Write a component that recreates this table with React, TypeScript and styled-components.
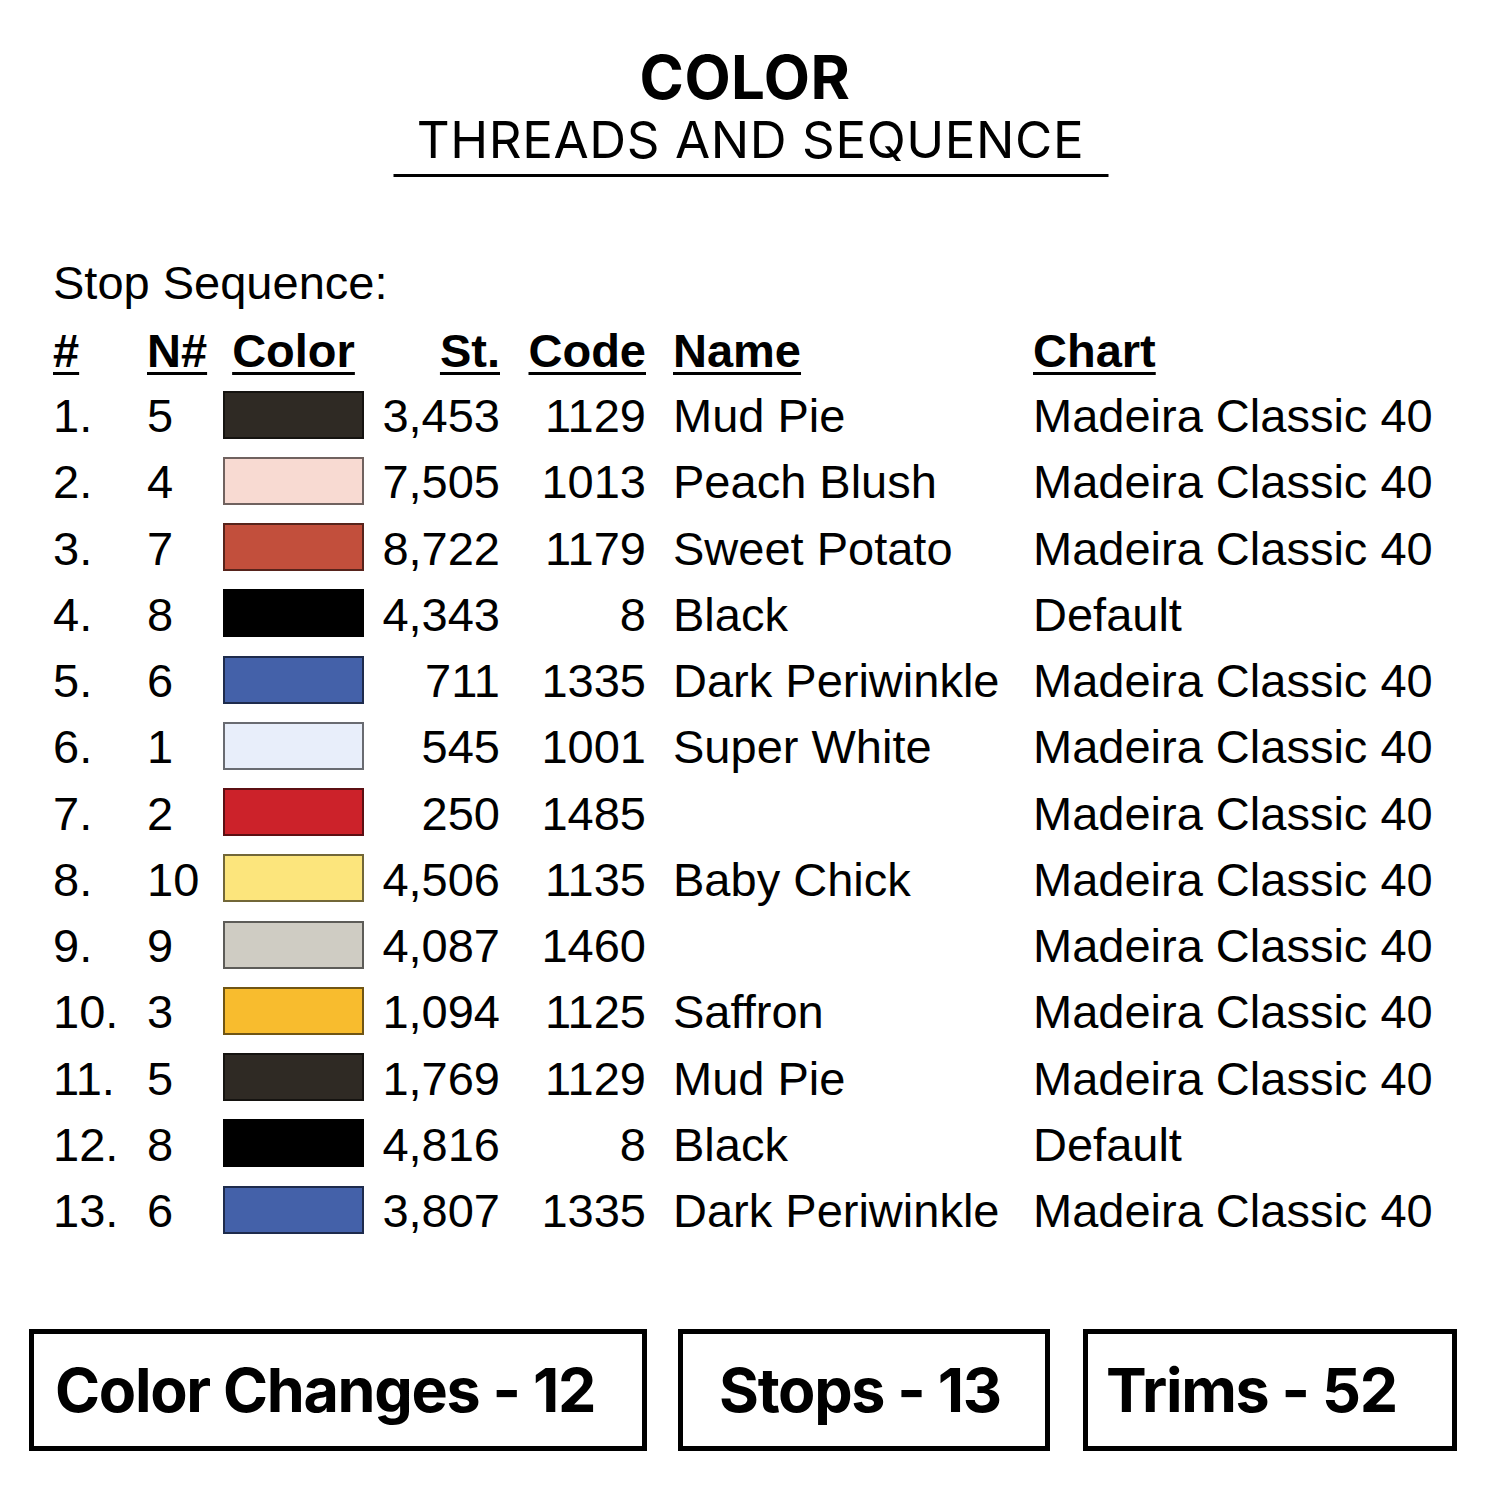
import React from "react";
import styled, { createGlobalStyle } from "styled-components";

const Global = createGlobalStyle`
  html, body { margin: 0; padding: 0; background: #fff; }
  body { font-family: "Liberation Sans", Arial, sans-serif; color: #000; }
`;

const Page = styled.div`
  width: 1500px;
  height: 1500px;
  background: #fff;
  display: flex;
  flex-direction: column;
  overflow: hidden;
`;

const TitleBlock = styled.header`
  padding-top: 47px;
  display: flex;
  flex-direction: column;
  align-items: center;
`;

const Title = styled.h1`
  margin: 0;
  font-family: Inter, "Open Sans", sans-serif;
  font-weight: 700;
  font-size: 60px;
  line-height: 60px;
  letter-spacing: 0.5px;
  transform: translateX(-5px);
`;

const Subtitle = styled.h2`
  margin: 7px 0 0 0;
  width: 715px;
  padding-bottom: 9px;
  border-bottom: 3.5px solid #000;
  text-align: center;
  font-family: Inter, "Open Sans", sans-serif;
  font-weight: 400;
  font-size: 51px;
  line-height: 51px;
  letter-spacing: 0.6px;
  transform: translateX(0.5px);
`;

const Section = styled.section`
  padding-left: 53px;
  margin-top: 82px;
`;

const Caption = styled.div`
  font-size: 47px;
  line-height: 47px;
`;

const Table = styled.div`
  margin-top: 13px;
  display: grid;
  grid-template-columns: 94px 76px 141px 136px 146px 387px auto;
  grid-template-rows: 64px;
  grid-auto-rows: 66.25px;
  font-size: 47px;
  align-items: center;
`;

const Cell = styled.div<{ $align?: "left" | "right" | "center"; $indent?: number }>`
  text-align: ${(p) => p.$align ?? "left"};
  padding-left: ${(p) => p.$indent ?? 0}px;
  white-space: nowrap;
  line-height: 66px;
`;

const Head = styled(Cell)`
  font-weight: 700;
  text-decoration: underline;
  text-decoration-thickness: 3px;
  text-underline-offset: 5px;
`;

const Swatch = styled.div<{ $color: string }>`
  height: 48px;
  width: 141px;
  box-sizing: border-box;
  background: ${(p) => p.$color};
  border: 2px solid rgba(0, 0, 0, 0.55);
  margin-top: -3px;
`;

const Summary = styled.div`
  margin-top: 85px;
  padding-left: 29px;
  display: flex;
  align-items: stretch;
`;

const Box = styled.div<{ $width: number; $pad: number; $gap: number }>`
  width: ${(p) => p.$width}px;
  height: 122px;
  box-sizing: border-box;
  border: 5px solid #000;
  margin-right: ${(p) => p.$gap}px;
  padding-left: ${(p) => p.$pad}px;
  display: flex;
  align-items: center;
  font-family: Inter, "Open Sans", sans-serif;
  font-weight: 700;
  font-size: 61px;
  letter-spacing: -1.3px;
  white-space: nowrap;
`;

type Row = { n: string; c: string; st: string; code: string; name: string; chart: string };

const MUD = "#2f2a24";
const PERI = "#4461a9";

const rows: Row[] = [
  { n: "5", c: MUD, st: "3,453", code: "1129", name: "Mud Pie", chart: "Madeira Classic 40" },
  { n: "4", c: "#f8dad2", st: "7,505", code: "1013", name: "Peach Blush", chart: "Madeira Classic 40" },
  { n: "7", c: "#c24f3c", st: "8,722", code: "1179", name: "Sweet Potato", chart: "Madeira Classic 40" },
  { n: "8", c: "#000000", st: "4,343", code: "8", name: "Black", chart: "Default" },
  { n: "6", c: PERI, st: "711", code: "1335", name: "Dark Periwinkle", chart: "Madeira Classic 40" },
  { n: "1", c: "#e8eefa", st: "545", code: "1001", name: "Super White", chart: "Madeira Classic 40" },
  { n: "2", c: "#cc222a", st: "250", code: "1485", name: "", chart: "Madeira Classic 40" },
  { n: "10", c: "#fce57c", st: "4,506", code: "1135", name: "Baby Chick", chart: "Madeira Classic 40" },
  { n: "9", c: "#cfccc3", st: "4,087", code: "1460", name: "", chart: "Madeira Classic 40" },
  { n: "3", c: "#f8bc2e", st: "1,094", code: "1125", name: "Saffron", chart: "Madeira Classic 40" },
  { n: "5", c: MUD, st: "1,769", code: "1129", name: "Mud Pie", chart: "Madeira Classic 40" },
  { n: "8", c: "#000000", st: "4,816", code: "8", name: "Black", chart: "Default" },
  { n: "6", c: PERI, st: "3,807", code: "1335", name: "Dark Periwinkle", chart: "Madeira Classic 40" },
];

export default function App() {
  return (
    <Page>
      <Global />
      <TitleBlock>
        <Title>COLOR</Title>
        <Subtitle>THREADS AND SEQUENCE</Subtitle>
      </TitleBlock>
      <Section>
        <Caption>Stop Sequence:</Caption>
        <Table>
          <Head>#</Head>
          <Head>N#</Head>
          <Head $align="center">Color</Head>
          <Head $align="right">St.</Head>
          <Head $align="right">Code</Head>
          <Head $indent={27}>Name</Head>
          <Head>Chart</Head>
          {rows.map((r, i) => (
            <React.Fragment key={i}>
              <Cell>{i + 1}.</Cell>
              <Cell>{r.n}</Cell>
              <Swatch $color={r.c} />
              <Cell $align="right">{r.st}</Cell>
              <Cell $align="right">{r.code}</Cell>
              <Cell $indent={27}>{r.name}</Cell>
              <Cell>{r.chart}</Cell>
            </React.Fragment>
          ))}
        </Table>
      </Section>
      <Summary>
        <Box $width={618} $pad={21} $gap={31}>Color Changes - 12</Box>
        <Box $width={372} $pad={36} $gap={33}>Stops - 13</Box>
        <Box $width={374} $pad={18} $gap={0}>Trims - 52</Box>
      </Summary>
    </Page>
  );
}
